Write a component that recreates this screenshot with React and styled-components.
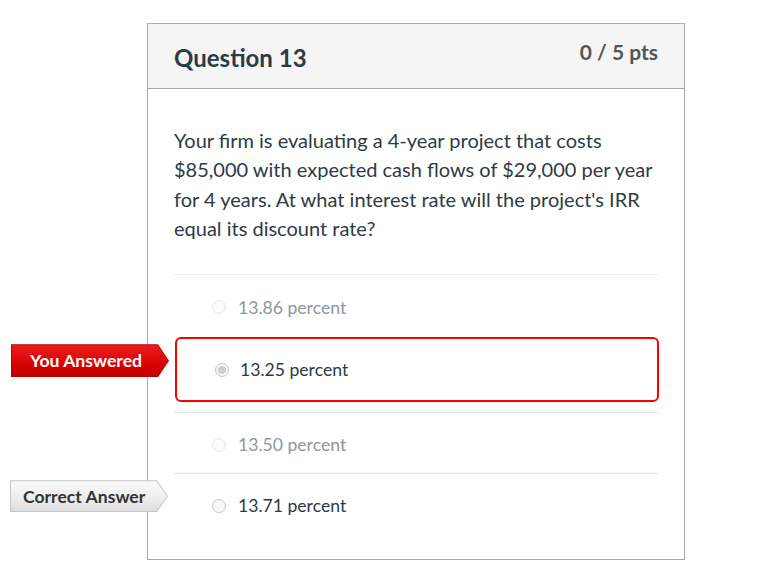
import React from "react";
import styled, { createGlobalStyle } from "styled-components";

const Global = createGlobalStyle`
  html, body { margin: 0; padding: 0; background: #fff; }
  body { font-family: Lato, "Open Sans", "Liberation Sans", sans-serif; color: #2d3b45; }
`;

const Page = styled.div`
  padding: 23px 0 0 147px;
  width: 768px;
  height: 561px;
  box-sizing: border-box;
  overflow: hidden;
`;

const Card = styled.div`
  width: 538px;
  height: 537px;
  box-sizing: border-box;
  border: 1px solid #aaa;
  display: flex;
  flex-direction: column;
`;

const Header = styled.div`
  height: 64px;
  background: #f5f5f5;
  border-bottom: 1px solid #aaa;
  display: flex;
  justify-content: space-between;
  align-items: flex-start;
  padding: 0 26px;
`;

const Title = styled.h2`
  margin: 20px 0 0;
  font-size: 24px;
  font-weight: 700;
  color: #2d3b45;
  line-height: 28px;
`;

const Points = styled.div`
  margin-top: 16px;
  font-size: 21px;
  font-weight: 700;
  color: #555;
  line-height: 24px;
`;

const Body = styled.div`
  padding: 37px 26px 0;
`;

const QuestionText = styled.p`
  margin: 0 0 31px;
  font-size: 20px;
  line-height: 29.3px;
  color: #2d3b45;
`;

const Answers = styled.div`
  border-top: 1px solid #eee;
  display: flex;
  flex-direction: column;
`;

const Row = styled.div`
  position: relative;
  height: 61px;
  display: flex;
  align-items: center;
  padding-left: 38px;
  padding-top: 3px;
  box-sizing: border-box;
  border-top: ${(p) => (p.$divider ? "1px solid #e2e2e2" : "none")};
  font-size: 17.6px;
  color: ${(p) => (p.$muted ? "#8e979c" : "#2d3b45")};
`;

const SelectedWrap = styled.div`
  position: relative;
  padding: 1px 0 10px 1px;
`;

const SelectedBox = styled.div`
  height: 65px;
  margin-right: -1px;
  box-sizing: border-box;
  border: 2px solid #f00;
  border-radius: 6px;
  display: flex;
  align-items: center;
  padding-left: 38px;
  font-size: 17.6px;
  color: #2d3b45;
`;

const Radio = styled.span`
  width: 14px;
  height: 14px;
  border-radius: 50%;
  box-sizing: border-box;
  margin-right: ${(p) => (p.$checked ? 11 : 12)}px;
  flex: none;
  border: 1px solid ${(p) => (p.$faded ? "#e6e6e6" : "#c8c8c8")};
  background: ${(p) => (p.$faded ? "#fbfbfb" : "#f7f7f7")};
  display: flex;
  align-items: center;
  justify-content: center;
  &::after {
    content: "";
    display: ${(p) => (p.$checked ? "block" : "none")};
    width: 8px;
    height: 8px;
    border-radius: 50%;
    background: #cfcfcf;
  }
`;

const Label = styled.div`
  position: absolute;
  top: ${(p) => p.$top}px;
  right: calc(100% + ${(p) => p.$gap}px);
  width: ${(p) => p.$w}px;
  height: ${(p) => p.$h}px;
  clip-path: polygon(0 0, calc(100% - 11px) 0, 100% 50%, calc(100% - 11px) 100%, 0 100%);
  background: ${(p) => p.$edge};
  display: flex;
  align-items: center;
  padding-left: ${(p) => p.$pad}px;
  box-sizing: border-box;
  font-size: 17.6px;
  font-weight: 700;
  color: ${(p) => p.$color};
  &::before {
    content: "";
    position: absolute;
    inset: 1px;
    clip-path: polygon(0 0, calc(100% - 10.5px) 0, 100% 50%, calc(100% - 10.5px) 100%, 0 100%);
    background: ${(p) => p.$fill};
  }
  span { position: relative; }
`;

export default function App() {
  return (
    <Page>
      <Global />
      <Card>
        <Header>
          <Title>Question 13</Title>
          <Points>0 / 5 pts</Points>
        </Header>
        <Body>
          <QuestionText>
            Your firm is evaluating a 4-year project that costs $85,000 with
            expected cash flows of $29,000 per year for 4 years. At what
            interest rate will the project's IRR equal its discount rate?
          </QuestionText>
          <Answers>
            <Row $muted>
              <Radio $faded />
              13.86 percent
            </Row>
            <SelectedWrap>
              <Label
                $top={8}
                $gap={5}
                $w={158}
                $h={33}
                $pad={19}
                $color="#fff"
                $edge="#b80000"
                $fill="linear-gradient(#ee1d1d, #d40000 70%, #c20000)"
              >
                <span>You Answered</span>
              </Label>
              <SelectedBox>
                <Radio $checked />
                13.25 percent
              </SelectedBox>
            </SelectedWrap>
            <Row $muted $divider>
              <Radio $faded />
              13.50 percent
            </Row>
            <Row $divider>
              <Label
                $top={6}
                $gap={6}
                $w={158}
                $h={32}
                $pad={13}
                $color="#333"
                $edge="#c4c4c4"
                $fill="linear-gradient(#fafafa, #ececec 60%, #dedede)"
              >
                <span>Correct Answer</span>
              </Label>
              <Radio />
              13.71 percent
            </Row>
          </Answers>
        </Body>
      </Card>
    </Page>
  );
}
